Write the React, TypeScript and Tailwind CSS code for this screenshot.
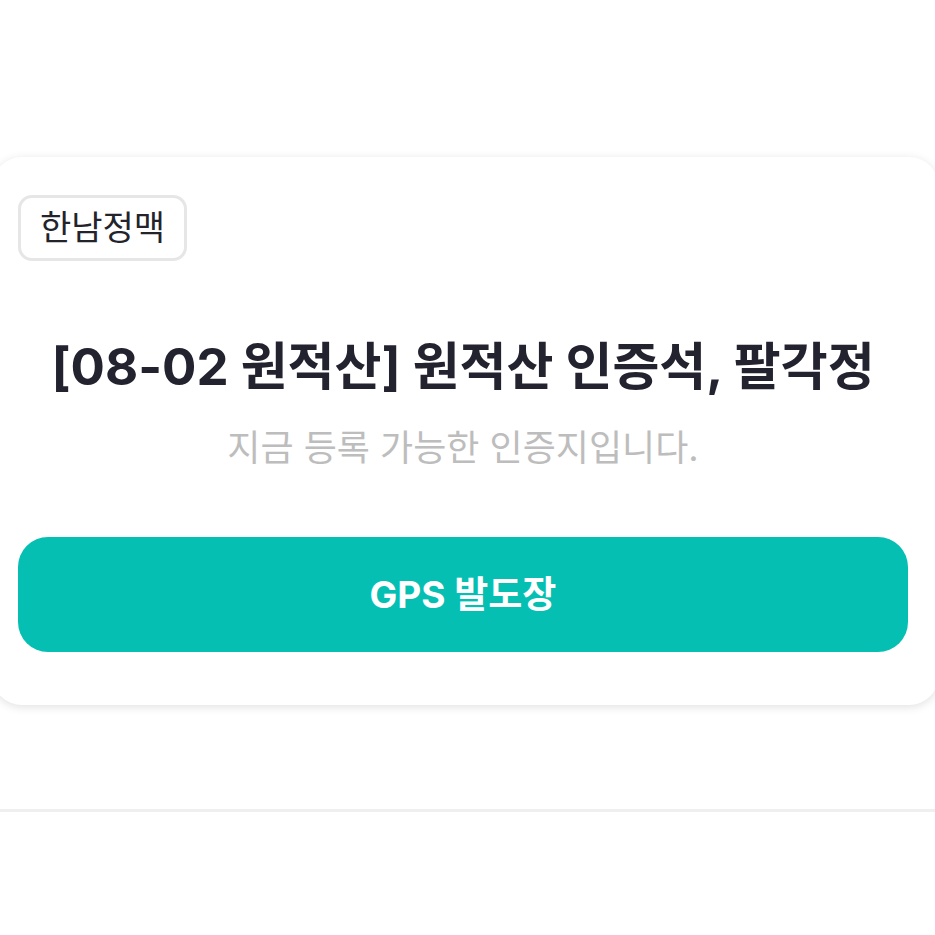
import React from 'react';

const font = { fontFamily: 'Inter, "Noto Sans CJK KR", "Noto Sans", sans-serif' };

const App: React.FC = () => {
  return (
    <div className="w-[935px] h-[935px] bg-white overflow-hidden" style={font}>
      <div className="h-[157px]" />

      {/* Card */}
      <div className="ml-[-8px] w-[947px] h-[548px] bg-white rounded-[30px] shadow-[0_2px_10px_rgba(0,0,0,0.12)] pl-[26px] pr-[31px] pt-[38px] flex flex-col">
        <div className="self-start h-[66px] px-[19px] flex items-center border-[3px] border-[#e6e6e6] rounded-[14px] text-[34px] leading-none text-[#23232b]">
          한남정맥
        </div>

        <h1 className="mt-[76px] text-center text-[51px] leading-[60px] font-bold text-[#23222f] whitespace-nowrap">
          [08-02 원적산] 원적산 인증석, 팔각정
        </h1>
        <p className="mt-[29px] text-center text-[36px] leading-[44px] text-[#bdbdbd]">
          지금 등록 가능한 인증지입니다.
        </p>

        <button className="mt-[67px] h-[115px] w-full shrink-0 rounded-[30px] bg-[#05bfb3] text-white text-[37px] font-bold">
          GPS 발도장
        </button>
      </div>

      <div className="mt-[104px] h-[3px] bg-[#efefef]" />
    </div>
  );
};

export default App;
